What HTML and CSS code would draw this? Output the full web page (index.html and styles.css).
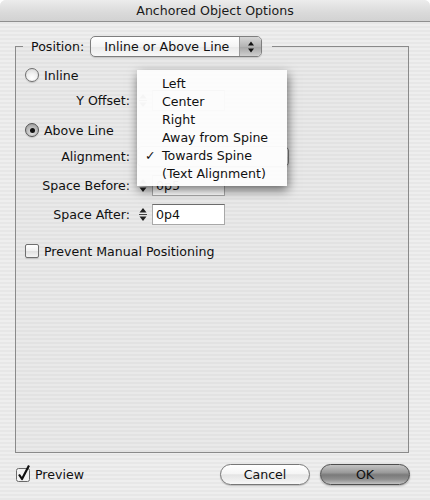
FILE: index.html
```html
<!DOCTYPE html>
<html>
<head>
<meta charset="utf-8">
<link rel="stylesheet" href="styles.css">
</head>
<body>
<div class="window">
  <div class="titlebar">Anchored Object Options</div>
  <fieldset class="group">
    <legend class="legend">
      <span class="legend-label">Position:</span>
      <span class="popup">
        <span class="popup-text">Inline or Above Line</span>
        <span class="popup-arrows">
          <svg width="8" height="12" viewBox="0 0 8 12"><path d="M4 0.5 L7 4.5 L1 4.5 Z M4 11.5 L7 7.5 L1 7.5 Z" fill="#111"/></svg>
        </span>
      </span>
    </legend>
    <div class="rows">
      <div class="radio-row row-inline"><span class="radio"></span><span>Inline</span></div>
      <div class="field-row row-yoff">
        <span class="lbl">Y Offset:</span>
        <span class="stepper"><svg width="12" height="21" viewBox="0 0 12 21"><path d="M6 4 L9.5 8.5 L2.5 8.5 Z M6 17 L9.5 12.5 L2.5 12.5 Z" fill="#222"/><path d="M2 10.5 H10" stroke="#444" stroke-width="1"/></svg></span>
        <span class="input"></span>
      </div>
      <div class="radio-row row-above"><span class="radio on"></span><span>Above Line</span></div>
      <div class="field-row row-align">
        <span class="lbl">Alignment:</span>
        <span class="popup small"></span>
      </div>
      <div class="field-row row-before">
        <span class="lbl">Space Before:</span>
        <span class="stepper"><svg width="12" height="21" viewBox="0 0 12 21"><path d="M6 4 L9.5 8.5 L2.5 8.5 Z M6 17 L9.5 12.5 L2.5 12.5 Z" fill="#222"/><path d="M2 10.5 H10" stroke="#444" stroke-width="1"/></svg></span>
        <span class="input">0p5</span>
      </div>
      <div class="field-row row-after">
        <span class="lbl">Space After:</span>
        <span class="stepper"><svg width="12" height="21" viewBox="0 0 12 21"><path d="M6 4 L9.5 8.5 L2.5 8.5 Z M6 17 L9.5 12.5 L2.5 12.5 Z" fill="#222"/><path d="M2 10.5 H10" stroke="#444" stroke-width="1"/></svg></span>
        <span class="input">0p4</span>
      </div>
      <div class="radio-row row-prevent"><span class="checkbox"></span><span>Prevent Manual Positioning</span></div>
    </div>
  </fieldset>
  <div class="footer">
    <div class="preview">
      <svg class="check" width="16" height="18" viewBox="0 0 16 18"><rect x="0.5" y="4.5" width="13" height="13" rx="2" fill="#f2f2f2" stroke="#6a6a6a"/><path d="M3 10.5 L6 15 L13 1.5" fill="none" stroke="#111" stroke-width="2.2" stroke-linejoin="round"/></svg>
      <span>Preview</span>
    </div>
    <div class="buttons">
      <span class="btn cancel">Cancel</span>
      <span class="btn ok">OK</span>
    </div>
  </div>
  <div class="menu">
    <div class="mi">Left</div>
    <div class="mi">Center</div>
    <div class="mi">Right</div>
    <div class="mi">Away from Spine</div>
    <div class="mi checked"><span class="tick">✓</span>Towards Spine</div>
    <div class="mi">(Text Alignment)</div>
  </div>
</div>
</body>
</html>
```
FILE: styles.css
```css
html, body {
  margin: 0;
  padding: 0;
}
body {
  width: 430px;
  height: 500px;
  overflow: hidden;
  font-family: "DejaVu Sans", "Liberation Sans", sans-serif;
  font-size: 12.6px;
  color: #111;
}
.window {
  position: relative;
  width: 430px;
  height: 500px;
  background: repeating-linear-gradient(to bottom, #eeeeee 0, #eeeeee 2px, #e7e7e7 2px, #e7e7e7 4px);
  border-radius: 6px 6px 0 0;
  overflow: hidden;
}
.titlebar {
  height: 21px;
  line-height: 21px;
  text-align: center;
  color: #1a1a1a;
  background: linear-gradient(#ececec, #dadada 60%, #d2d2d2);
  border-bottom: 1px solid #8f8f8f;
}
.group {
  box-sizing: border-box;
  margin: 14px 21px 0 15px;
  padding: 0;
  height: 417px;
  border: 1px solid #8a8a8a;
  background: rgba(0, 0, 0, 0.02);
}
.legend {
  display: flex;
  align-items: center;
  gap: 6px;
  margin-left: 7px;
  padding: 0 10px 0 8px;
}
.popup {
  box-sizing: border-box;
  display: flex;
  align-items: center;
  width: 172px;
  height: 21px;
  border: 1px solid #7e7e7e;
  border-radius: 5px;
  background: linear-gradient(#ffffff, #f4f4f4 50%, #e9e9e9 51%, #f8f8f8);
  box-shadow: 0 1px 1px rgba(0, 0, 0, 0.15);
  overflow: hidden;
}
.popup-text {
  flex: 1;
  padding-left: 13px;
  white-space: nowrap;
}
.popup-arrows {
  width: 21px;
  height: 100%;
  display: flex;
  align-items: center;
  justify-content: center;
  border-left: 1px solid #9a9a9a;
  background: linear-gradient(#d6d6d6, #b4b4b4 50%, #a4a4a4 51%, #cfcfcf);
}
.rows {
  display: flex;
  flex-direction: column;
  padding-top: 8px;
}
.radio-row {
  display: flex;
  align-items: center;
  gap: 5px;
  height: 20px;
  padding-left: 9px;
}
.field-row {
  display: grid;
  grid-template-columns: 114px 12px 69px;
  column-gap: 7px;
  align-items: center;
  height: 21px;
}
.field-row .input {
  margin-left: -4px;
}
.lbl {
  text-align: right;
}
.row-yoff { margin-top: 5px; }
.row-above { margin-top: 9px; }
.row-align { margin-top: 6px; }
.row-before { margin-top: 8px; }
.row-after { margin-top: 8px; }
.row-prevent { margin-top: 16px; }
.radio {
  box-sizing: border-box;
  width: 14px;
  height: 14px;
  border-radius: 50%;
  border: 1px solid #6f6f6f;
  background: radial-gradient(circle at 50% 75%, #ffffff, #f0f0f0 45%, #cfcfcf);
  box-shadow: 0 1px 1px rgba(0, 0, 0, 0.15);
  display: flex;
  align-items: center;
  justify-content: center;
}
.radio.on {
  background: radial-gradient(circle at 50% 70%, #e4e4e4, #b8b8b8 55%, #8e8e8e);
  border-color: #555;
}
.radio.on::after {
  content: "";
  width: 5px;
  height: 5px;
  border-radius: 50%;
  background: #111;
}
.checkbox {
  box-sizing: border-box;
  width: 14px;
  height: 14px;
  border-radius: 2px;
  border: 1px solid #6f6f6f;
  background: linear-gradient(#ffffff, #f0f0f0 50%, #e0e0e0 51%, #f4f4f4);
  box-shadow: 0 1px 1px rgba(0, 0, 0, 0.15);
}
.stepper {
  display: block;
  width: 12px;
  height: 21px;
}
.stepper svg {
  display: block;
}
.input {
  box-sizing: border-box;
  height: 21px;
  line-height: 19px;
  padding-left: 3px;
  background: #fff;
  border: 1px solid #a8a8a8;
  border-top-color: #6d6d6d;
}
.popup.small {
  width: 152px;
  grid-column: 2 / span 2;
}
.footer {
  display: flex;
  align-items: center;
  justify-content: space-between;
  padding: 11px 20px 0 16px;
}
.preview {
  display: flex;
  align-items: center;
  gap: 3px;
  margin-top: -3px;
}
.check {
  display: block;
}
.preview span {
  margin-top: 3px;
}
.buttons {
  display: flex;
  gap: 10px;
}
.btn {
  box-sizing: border-box;
  display: flex;
  align-items: center;
  justify-content: center;
  width: 90px;
  height: 21px;
  border-radius: 11px;
  border: 1px solid #777;
}
.cancel {
  background: linear-gradient(#ffffff, #f5f5f5 45%, #e4e4e4 52%, #f7f7f7);
  box-shadow: 0 1px 1px rgba(0, 0, 0, 0.2);
}
.ok {
  border-color: #4e4e4e;
  background: linear-gradient(#c4c4c4, #9a9a9a 40%, #7a7a7a 52%, #8e8e8e 75%, #c2c2c2);
  box-shadow: 0 1px 2px rgba(0, 0, 0, 0.3);
}
.menu {
  position: absolute;
  left: 137px;
  top: 70px;
  width: 150px;
  padding: 5px 0 3px;
  background: rgba(252, 252, 252, 0.97);
  box-shadow: 1px 4px 10px rgba(0, 0, 0, 0.55);
}
.mi {
  position: relative;
  height: 18px;
  line-height: 18px;
  padding-left: 25px;
  white-space: nowrap;
}
.tick {
  position: absolute;
  left: 8px;
}
```
